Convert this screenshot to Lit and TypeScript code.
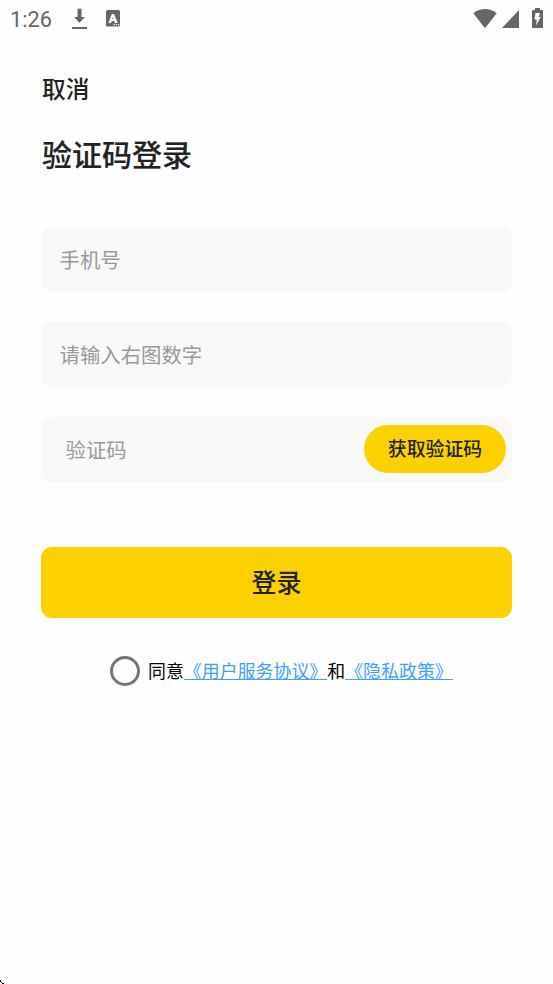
import { LitElement, html, css } from "lit";
import { customElement } from "lit/decorators.js";

@customElement("status-bar")
class StatusBar extends LitElement {
  static styles = css`
    :host { display: flex; align-items: center; height: 38px; padding-left: 10px; color: #666; font: 400 21.700px/38px Roboto, sans-serif; }
    .time { width: 61px; padding-top: 1px; }
    svg { display: block; fill: #666; }
    .letter { fill: #fff; font: 900 13px Roboto, sans-serif; }
    .app { margin: 0 0 1px 18px; }
    .wifi { margin-left: auto; margin-bottom: 1px; }
    .cell { margin-left: 5px; }
    .battery { margin: 0 10px 2px 13px; }
    .bolt, .dots { fill: #fff; }
  `;
  render() {
    return html`
      <span class="time">1:26</span>
      <svg width="17" height="22" viewBox="0 0 17 22"><path d="M6.500 .8h4v8.200H14l-5.500 5.800L3 9h3.500zM1 19h15v2H1z"/></svg>
      <svg class="app" width="14" height="17" viewBox="0 0 14 17">
        <rect width="14" height="16.500" rx="1.500"/>
        <text class="letter" x="7" y="12.500" text-anchor="middle">A</text>
        <path class="dots" d="M7.500 14h1.200v1.200H7.500zM9.700 14h1.200v1.200H9.700zM11.900 14h1.200v1.200h-1.200z"/>
      </svg>
      <svg class="wifi" width="24" height="19" viewBox="0 0 24 19"><path d="M.3 4.200Q12-4.200 23.700 4.200L12.800 18.200Q12 19 11.200 18.200z"/></svg>
      <svg class="cell" width="17" height="18" viewBox="0 0 17 18"><path d="M17 0v18H0z"/></svg>
      <svg class="battery" width="11" height="20" viewBox="0 0 11 20">
        <path d="M3 0h5v2h2q1 0 1 1v16q0 1-1 1H1q-1 0-1-1V3q0-1 1-1h2z"/>
        <path class="bolt" d="M3.500 5H8L6.700 9h2L4 17.500l.8-6H2.500z"/>
      </svg>`;
  }
}

@customElement("app-root")
class AppRoot extends LitElement {
  static styles = css`
    :host { display: flow-root; box-sizing: border-box; position: relative; height: 984px; background: #fefefe; overflow: hidden; color: #222; font-family: "Noto Sans CJK SC", sans-serif; }
    main { display: flex; flex-direction: column; padding: 0 41px; }
    .cancel { margin: 33px 0 0 1px; height: 36px; font-size: 23.700px; line-height: 35px; font-weight: 500; }
    h1 { margin: 25px 0 51px 1px; height: 44px; font-size: 30px; line-height: 42px; font-weight: 500; -webkit-text-stroke: .15px #222; }
    .field { display: flex; align-items: center; justify-content: space-between; box-sizing: border-box; height: 65px; margin-bottom: 30px; padding: 0 6px 0 18.500px; border-radius: 11px; background: #f8f8f8; color: #999; font-size: 20.400px; font-weight: 400; }
    .field span { line-height: 30px; margin-bottom: 2px; }
    .code { padding-left: 24.500px; }
    .get { width: 142px; height: 48px; border-radius: 24px; background: #fdd100; color: #222; text-align: center; font-size: 18.900px; line-height: 45px; font-weight: 500; margin-bottom: 1px; }
    .login { height: 71px; margin-top: 35px; border-radius: 11px; background: #fdd100; text-align: center; font-size: 25px; line-height: 69px; font-weight: 500; }
    .agree { display: flex; align-items: center; height: 30px; margin: 38px 0 0 68.500px; color: #000; font-size: 17.930px; line-height: 28px; white-space: nowrap; }
    .agree span { margin-bottom: 2px; }
    .agree .radio { box-sizing: border-box; width: 30px; height: 30px; border: 3px solid #757575; border-radius: 50%; margin: 0 8.500px 0 0; }
    .agree .link { color: #409eff; border-bottom: 1px solid #409eff; height: 20px; line-height: 20px; box-sizing: border-box; margin-bottom: 3px; }
    .corner { position: absolute; left: 0; bottom: 0; }
  `;
  render() {
    return html`
      <status-bar></status-bar>
      <main>
        <div class="cancel">取消</div>
        <h1>验证码登录</h1>
        <div class="field"><span>手机号</span></div>
        <div class="field"><span>请输入右图数字</span></div>
        <div class="field code"><span>验证码</span><div class="get">获取验证码</div></div>
        <div class="login">登录</div>
        <div class="agree">
          <span class="radio"></span><span>同意</span><span class="link">《用户服务协议》</span><span>和</span><span class="link">《隐私政策》</span>
        </div>
      </main>
      <svg class="corner" width="5" height="5" viewBox="0 0 5 5" shape-rendering="crispEdges"><path d="M0 1h1v2H0zM1 3h1v1H1zM2 4h1v1H2zM3 4h1v1H3z"/></svg>`;
  }
}
